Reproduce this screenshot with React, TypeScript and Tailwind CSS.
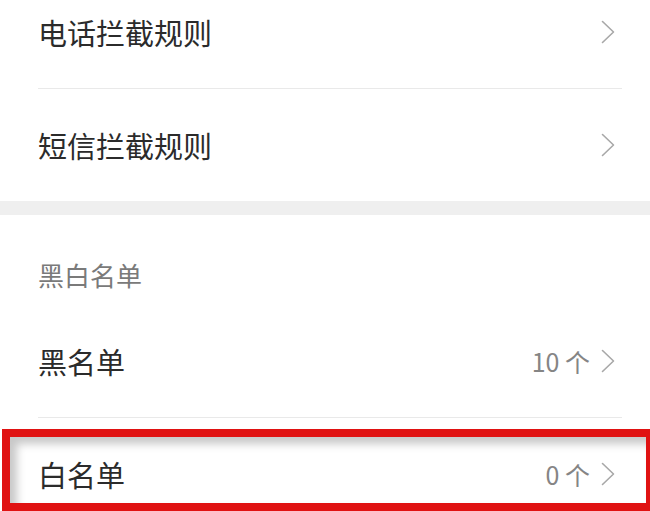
import React from 'react';

type Row = { title: string; value?: string };

const font = '"Noto Sans CJK SC", "Noto Sans", sans-serif';

function Chevron() {
  return (
    <svg width="14" height="24" viewBox="0 0 14 24" fill="none" className="shrink-0">
      <polyline points="1.5,1.5 12.5,12 1.5,22.5" stroke="#a8a8a8" strokeWidth="1.6" strokeLinecap="round" strokeLinejoin="round" />
    </svg>
  );
}

function ListRow({ title, value }: Row) {
  return (
    <div className="flex h-[112px] items-center justify-between pl-[38px] pr-[35px]">
      <span className="text-[29px] leading-none text-[#2b2b2b]">{title}</span>
      <div className="flex items-center gap-[11px]">
        {value && <span className="text-[25px] leading-none text-[#858585]">{value}</span>}
        <Chevron />
      </div>
    </div>
  );
}

function Divider() {
  return <div className="ml-[38px] mr-[28px] h-px bg-[#e9e9e9]" />;
}

export default function App() {
  return (
    <div className="h-[511px] w-[650px] overflow-hidden bg-white" style={{ fontFamily: font }}>
      {/* 拦截规则 */}
      <div className="-mt-[24px]">
        <ListRow title="电话拦截规则" />
        <Divider />
        <ListRow title="短信拦截规则" />
      </div>

      <div className="h-[14px] bg-[#efefef]" />

      {/* 黑白名单 */}
      <div className="pl-[38px] pt-[48px] pb-[18px] text-[26px] leading-[24px] text-[#7a7a7a]">黑白名单</div>
      <ListRow title="黑名单" value="10 个" />
      <Divider />
      <div className="relative">
        <ListRow title="白名单" value="0 个" />
        <div className="pointer-events-none absolute left-[2px] right-[-4px] top-[11px] h-[82px] border-[8px] border-[#e01212] shadow-[inset_7px_7px_8px_rgba(0,0,0,0.22)]" />
      </div>
    </div>
  );
}
